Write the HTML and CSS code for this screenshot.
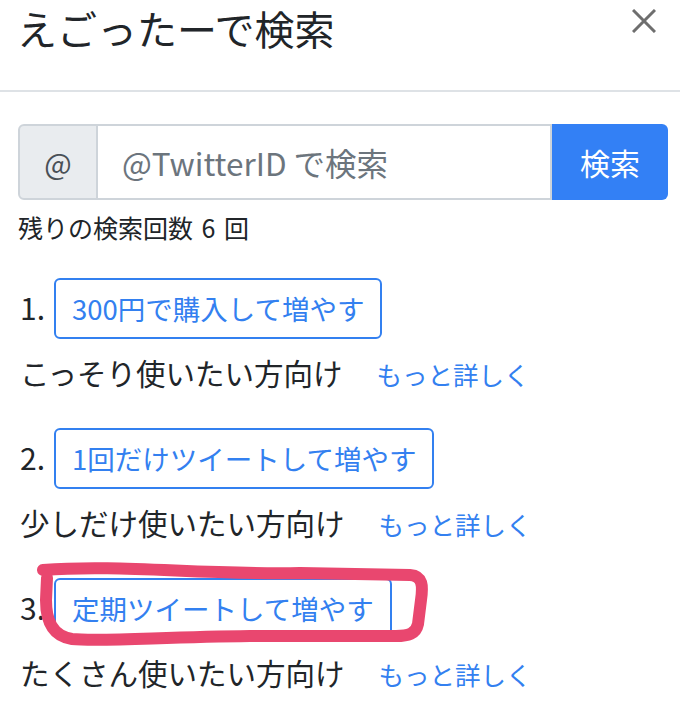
FILE: index.html
```html
<!DOCTYPE html>
<html lang="ja">
<head>
<meta charset="utf-8">
<title>えごったーで検索</title>
<link rel="stylesheet" href="styles.css">
</head>
<body>
<div class="modal">
  <header class="modal-header">
    <h1 class="modal-title">えごったーで検索</h1>
    <svg class="close" width="24" height="24" viewBox="0 0 24 24" aria-label="閉じる">
      <path d="M1 1 L23 23 M23 1 L1 23" stroke="#6e6e6e" stroke-width="3" fill="none"/>
    </svg>
  </header>
  <main class="modal-body">
    <div class="input-group">
      <div class="addon">@</div>
      <div class="field">@TwitterID で検索</div>
      <div class="search-btn">検索</div>
    </div>
    <p class="remaining">残りの検索回数 6 回</p>

    <ol class="plans">
      <li class="plan">
        <div class="plan-head"><span class="num">1.</span><a class="plan-btn">300円で購入して増やす</a></div>
        <p class="desc">こっそり使いたい方向け<a class="more">もっと詳しく</a></p>
      </li>
      <li class="plan">
        <div class="plan-head"><span class="num">2.</span><a class="plan-btn">1回だけツイートして増やす</a></div>
        <p class="desc">少しだけ使いたい方向け<a class="more">もっと詳しく</a></p>
      </li>
      <li class="plan">
        <div class="plan-head"><span class="num">3.</span><a class="plan-btn">定期ツイートして増やす</a></div>
        <p class="desc">たくさん使いたい方向け<a class="more">もっと詳しく</a></p>
      </li>
    </ol>
  </main>
</div>
<svg class="annotation" width="680" height="712" viewBox="0 0 680 712">
  <path d="M43 570 C 120 564, 200 575, 300 573 L 410 575 C 423 576, 423 586, 421 600 L 418 624 C 416 634, 408 636, 396 636 L 250 636 C 160 637, 100 642, 72 639 C 52 636, 46 620, 46 600 L 47 578"
        fill="none" stroke="#e9476f" stroke-width="12" stroke-linecap="round" stroke-linejoin="round"/>
</svg>
</body>
</html>
```

FILE: styles.css
```css
html, body {
  margin: 0;
  padding: 0;
  background: #ffffff;
}
body {
  font-family: "Noto Sans CJK JP", "Noto Sans", sans-serif;
  color: #212529;
  width: 680px;
  height: 712px;
  overflow: hidden;
  position: relative;
}
.modal-header {
  display: flex;
  justify-content: space-between;
  align-items: flex-start;
  padding: 0 24px 0 17px;
  border-bottom: 2px solid #dee2e6;
  box-sizing: border-box;
  height: 92px;
}
.modal-title {
  margin: 0;
  font-size: 40px;
  font-weight: 400;
  line-height: 56px;
}
.close {
  margin-top: 9px;
  display: block;
}
.modal-body {
  padding: 32px 12px 0 18px;
}
.input-group {
  display: flex;
  height: 76px;
}
.addon {
  width: 80px;
  box-sizing: border-box;
  border: 2px solid #ced4da;
  border-radius: 6px 0 0 6px;
  background: #e9ecef;
  color: #495057;
  font-size: 29px;
  display: flex;
  align-items: center;
  justify-content: center;
}
.field {
  width: 454px;
  box-sizing: border-box;
  border: 2px solid #ced4da;
  border-left: 0;
  padding-left: 24px;
  color: #6c757d;
  font-size: 31.5px;
  display: flex;
  align-items: center;
}
.search-btn {
  width: 116px;
  background: #3380f5;
  color: #ffffff;
  border-radius: 0 6px 6px 0;
  font-size: 30px;
  display: flex;
  align-items: center;
  justify-content: center;
}
.remaining {
  margin: 8px 0 0;
  font-size: 25px;
  line-height: 38px;
  word-spacing: 3px;
}
.plans {
  list-style: none;
  margin: 32px 0 0;
  padding: 0 0 0 2px;
}
.plan {
  margin-bottom: 33px;
}
.plan-head {
  display: flex;
  align-items: baseline;
}
.num {
  font-size: 30px;
  line-height: 41px;
  width: 34px;
}
.plan-btn {
  display: inline-block;
  font-size: 27.5px;
  line-height: 41px;
  padding: 8px 16px;
  border: 2px solid #3380f0;
  border-radius: 6px;
  color: #3380f0;
}
.desc {
  margin: 12px 0 0;
  font-size: 29.5px;
  line-height: 43px;
}
.more {
  margin-left: 34px;
  font-size: 25.5px;
  color: #3380f0;
}
.annotation {
  position: absolute;
  top: 0;
  left: 0;
  pointer-events: none;
}
```
